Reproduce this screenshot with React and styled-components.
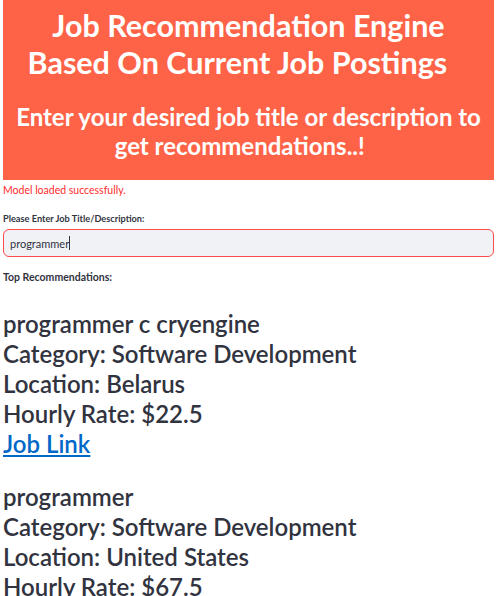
import React from 'react';
import styled, { createGlobalStyle } from 'styled-components';

const GlobalStyle = createGlobalStyle`
  html, body {
    margin: 0;
    padding: 0;
    background: #ffffff;
  }
  body {
    font-family: Lato, "Noto Sans", sans-serif;
    color: #31333f;
  }
`;

const results = [
  {
    title: 'programmer c cryengine',
    category: 'Software Development',
    location: 'Belarus',
    rate: '$22.5',
  },
  {
    title: 'programmer',
    category: 'Software Development',
    location: 'United States',
    rate: '$67.5',
  },
];

const Page = styled.div`
  padding: 0 2px 0 3px;
  overflow: hidden;
  height: 596px;
`;

const Banner = styled.header`
  background: #ff6347;
  color: #ffffff;
  text-align: center;
  padding: 7px 10px 8px;
  height: 180px;
  box-sizing: border-box;
`;

const Title = styled.h1`
  margin: 0;
  font-size: 30.5px;
  line-height: 37px;
  font-weight: 700;
`;

const Subtitle = styled.h2`
  margin: 21px 0 0;
  font-size: 24px;
  line-height: 29px;
  font-weight: 700;
`;

const Status = styled.p`
  margin: 3px 0 0;
  font-size: 10.5px;
  line-height: 14px;
  color: #ff2b2b;
`;

const Label = styled.label`
  display: block;
  margin-top: 16px;
  font-size: 9.2px;
  line-height: 12px;
  font-weight: 700;
`;

const Input = styled.div`
  margin-top: 4px;
  height: 28px;
  box-sizing: border-box;
  border: 1px solid #ff4b4b;
  border-radius: 6px;
  background: #f0f2f6;
  display: flex;
  align-items: center;
  padding: 0 6px;
  font-size: 11px;
  color: #31333f;
`;

const Caret = styled.span`
  display: inline-block;
  width: 1px;
  height: 14px;
  background: #31333f;
`;

const SectionLabel = styled.p`
  margin: 13px 0 0;
  font-size: 10.5px;
  line-height: 14px;
  font-weight: 700;
`;

const Results = styled.div`
  margin-top: 25px;
  display: flex;
  flex-direction: column;
  gap: 23px;
`;

const Result = styled.div`
  font-size: 24px;
  line-height: 30px;
  font-weight: 600;
  color: #31333f;
`;

const Line = styled.div``;

const JobLink = styled.a`
  color: #0068c9;
  text-decoration: underline;
`;

export default function App() {
  return (
    <>
      <GlobalStyle />
      <Page>
        <Banner>
          <Title>
            Job Recommendation Engine
            <br />
            Based On Current Job Postings&nbsp;&nbsp;&nbsp;
          </Title>
          <Subtitle>
            Enter your desired job title or description to
            <br />
            get recommendations..!&nbsp;&nbsp;&nbsp;
          </Subtitle>
        </Banner>
        <Status>Model loaded successfully.</Status>
        <Label>Please Enter Job Title/Description:</Label>
        <Input>
          programmer
          <Caret />
        </Input>
        <SectionLabel>Top Recommendations:</SectionLabel>
        <Results>
          {results.map((r) => (
            <Result key={r.title}>
              <Line>{r.title}</Line>
              <Line>Category: {r.category}</Line>
              <Line>Location: {r.location}</Line>
              <Line>Hourly Rate: {r.rate}</Line>
              <Line>
                <JobLink href="#">Job Link</JobLink>
              </Line>
            </Result>
          ))}
        </Results>
      </Page>
    </>
  );
}
